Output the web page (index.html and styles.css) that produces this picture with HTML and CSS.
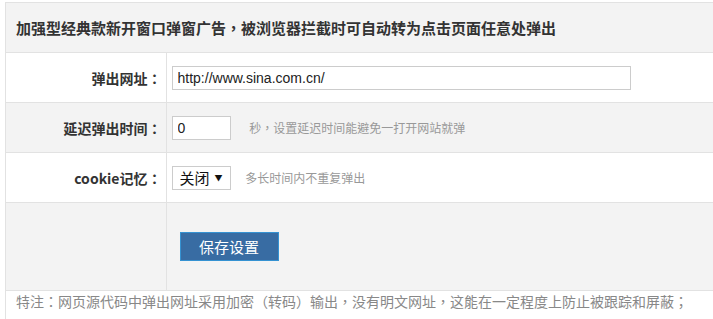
FILE: index.html
```html
<!DOCTYPE html>
<html lang="zh-TW">
<head>
  <meta charset="UTF-8">
  <title>弹窗广告设置</title>
  <link rel="stylesheet" href="styles.css">
</head>
<body>
  <div class="panel">
    <div class="panel-title">加强型经典款新开窗口弹窗广告，被浏览器拦截时可自动转为点击页面任意处弹出</div>
    <table class="form-table">
      <tr>
        <th>弹出网址：</th>
        <td><input type="text" class="ipt ipt-url" value="http://www.sina.com.cn/"></td>
      </tr>
      <tr class="alt">
        <th>延迟弹出时间：</th>
        <td>
          <input type="text" class="ipt ipt-short" value="0">
          <span class="tip">秒，设置延迟时间能避免一打开网站就弹</span>
        </td>
      </tr>
      <tr>
        <th>cookie记忆：</th>
        <td>
          <span class="select-wrap">
            <select class="sel">
              <option>关闭</option>
              <option>开启</option>
            </select>
            <span class="select-arrow">▼</span>
          </span>
          <span class="tip tip-near">多长时间内不重复弹出</span>
        </td>
      </tr>
      <tr class="alt row-submit">
        <th></th>
        <td><button class="btn-save">保存设置</button></td>
      </tr>
    </table>
    <div class="panel-note">特注：网页源代码中弹出网址采用加密（转码）输出，没有明文网址，这能在一定程度上防止被跟踪和屏蔽；</div>
  </div>
</body>
</html>
```

FILE: styles.css
```css
html, body {
  overflow: hidden;
}
body {
  margin: 2px 0 0 5px;
  font-family: "Noto Sans CJK TC", "Noto Sans CJK SC", "Microsoft YaHei", sans-serif;
  color: #333;
  background: #fff;
}
.panel {
  width: 730px;
  border: 1px solid #e2e2e2;
  border-bottom: none;
}
.panel-title {
  height: 49px;
  line-height: 49px;
  padding-left: 10px;
  background: #f3f3f3;
  font-size: 15px;
  font-weight: bold;
  color: #333;
  border-bottom: 1px solid #e2e2e2;
}
.form-table {
  width: 100%;
  border-collapse: collapse;
}
.form-table th,
.form-table td {
  border-bottom: 1px solid #e2e2e2;
  height: 49px;
  padding: 0;
}
.form-table th {
  width: 160px;
  border-right: 1px solid #e2e2e2;
  text-align: right;
  padding-right: 4px;
  font-size: 14px;
  font-weight: bold;
  color: #333;
  box-sizing: border-box;
}
.form-table td {
  padding-left: 5px;
  font-size: 12px;
}
.form-table tr.alt th,
.form-table tr.alt td {
  background: #f3f3f3;
}
.form-table tr.row-submit th,
.form-table tr.row-submit td {
  height: 87px;
}
.ipt {
  box-sizing: border-box;
  height: 24px;
  border: 1px solid #ccc;
  padding: 0 5px;
  font-family: "Liberation Sans", Arial, sans-serif;
  font-size: 14px;
  color: #222;
  background: #fff;
  vertical-align: middle;
  outline: none;
}
.ipt-url {
  width: 459px;
}
.ipt-short {
  width: 59px;
}
.tip {
  margin-left: 16px;
  color: #999;
  font-size: 12px;
  vertical-align: middle;
}
.tip-near {
  margin-left: 12px;
}
.select-wrap {
  position: relative;
  display: inline-block;
  vertical-align: middle;
}
.sel {
  -webkit-appearance: none;
  appearance: none;
  box-sizing: border-box;
  width: 59px;
  height: 24px;
  border: 1px solid #ccc;
  border-radius: 0;
  padding: 0 0 0 7px;
  font-family: "Noto Sans CJK TC", "Noto Sans CJK SC", sans-serif;
  font-size: 15px;
  color: #111;
  background: #fff;
  display: block;
}
.select-arrow {
  position: absolute;
  right: 8px;
  top: 7px;
  font-size: 8px;
  line-height: 10px;
  color: #111;
  pointer-events: none;
}
.btn-save {
  margin-left: 8px;
  width: 99px;
  height: 29px;
  background: #386ca3;
  border: 1px solid #3592d2;
  color: #fff;
  font-family: "Noto Sans CJK TC", "Noto Sans CJK SC", sans-serif;
  font-size: 15px;
  cursor: pointer;
  vertical-align: middle;
}
.panel-note {
  padding-left: 10px;
  line-height: 20px;
  height: 30px;
  font-size: 14px;
  color: #888;
}
```
